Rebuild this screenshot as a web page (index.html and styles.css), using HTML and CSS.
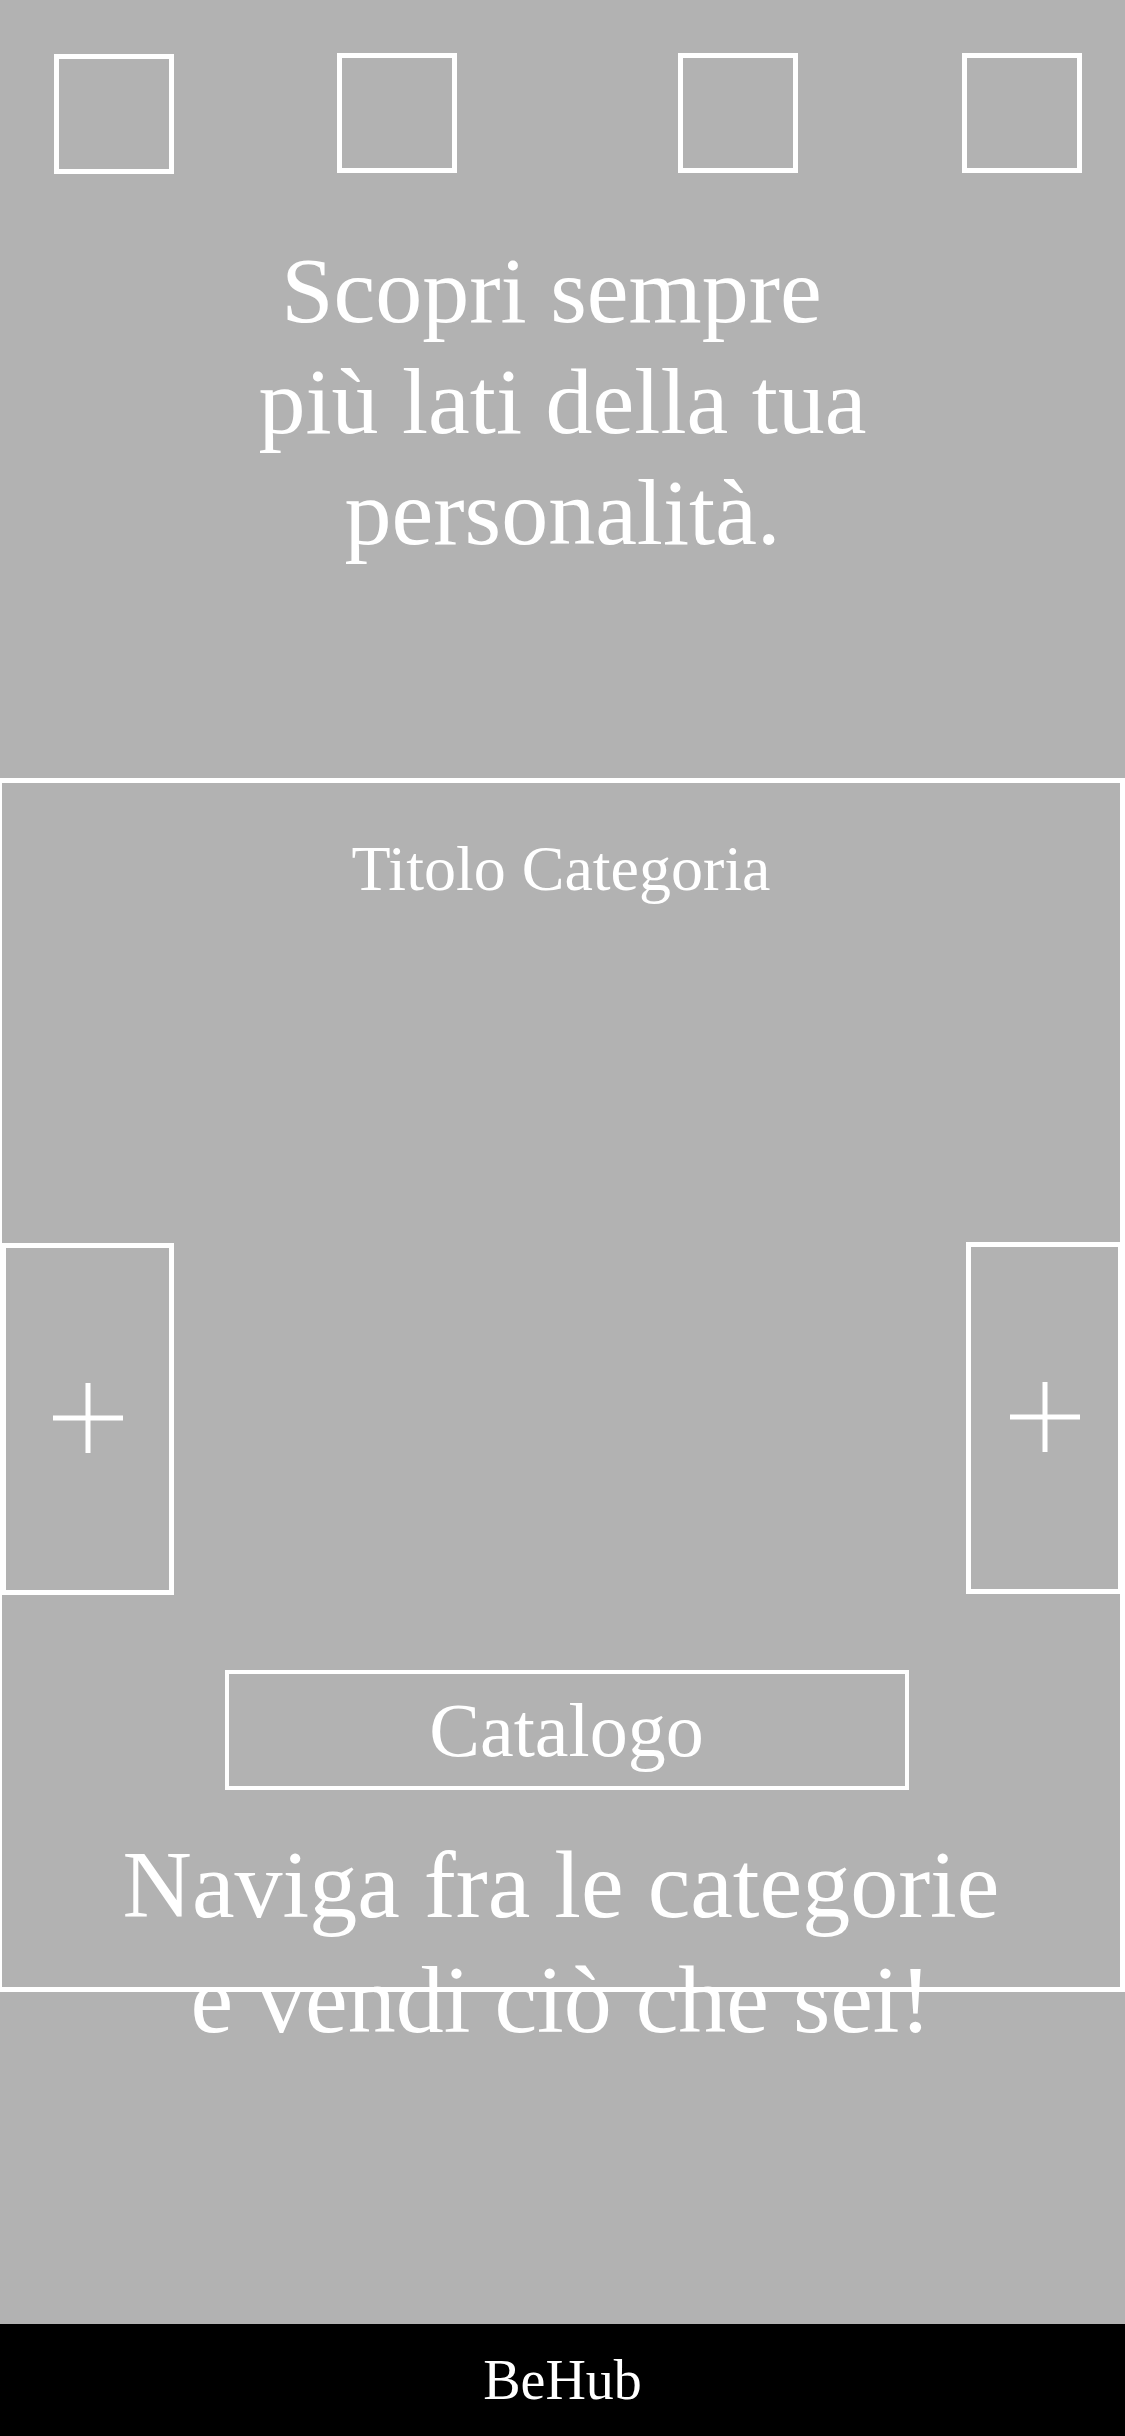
FILE: index.html
```html
<!DOCTYPE html>
<html lang="it">
<head>
<meta charset="utf-8">
<title>BeHub</title>
<link rel="stylesheet" href="styles.css">
</head>
<body>
<div class="page">
  <div class="top-icons">
    <div class="icon-box first"></div>
    <div class="icon-box second"></div>
    <div class="icon-box third"></div>
    <div class="icon-box fourth"></div>
  </div>
  <h1 class="hero"><span class="hero-first">Scopri sempre</span><br>più lati della tua<br>personalità.</h1>
  <section class="category">
    <h2 class="category-title">Titolo Categoria</h2>
    <div class="panels">
      <div class="panel left">
        <svg class="plus" width="70" height="70" viewBox="0 0 70 70"><rect x="32.5" y="0" width="5" height="70" fill="#fff"/><rect x="0" y="32.5" width="70" height="5" fill="#fff"/></svg>
      </div>
      <div class="panel right">
        <svg class="plus" width="70" height="70" viewBox="0 0 70 70"><rect x="32.5" y="0" width="5" height="70" fill="#fff"/><rect x="0" y="32.5" width="70" height="5" fill="#fff"/></svg>
      </div>
    </div>
    <div class="catalog-btn">Catalogo</div>
    <p class="tagline">Naviga fra le categorie<br>e vendi ciò che sei!</p>
  </section>
  <footer class="footer">BeHub</footer>
</div>
</body>
</html>
```
FILE: styles.css
```css
html, body {
  margin: 0;
  padding: 0;
}
body {
  background: #b2b2b2;
  color: #ffffff;
  font-family: "Liberation Serif", "Times New Roman", serif;
  overflow-x: hidden;
}
.page {
  min-height: 2436px;
  display: flex;
  flex-direction: column;
}
.top-icons {
  display: flex;
  align-items: flex-start;
  padding: 53px 0 0 54px;
  flex-shrink: 0;
}
.icon-box {
  width: 120px;
  height: 120px;
  box-sizing: border-box;
  border: 5px solid #ffffff;
  flex-shrink: 0;
}
.icon-box.first { margin-top: 1px; }
.icon-box.second { margin-left: 163px; }
.icon-box.third { margin-left: 221px; }
.icon-box.fourth { margin-left: 164px; }
.hero {
  margin: 61px 0 0 0;
  font-size: 94px;
  font-weight: normal;
  line-height: 111px;
  text-align: center;
  flex-shrink: 0;
}
.hero-first {
  padding-right: 22px;
}
.category {
  margin: 210px 0 0 -3px;
  width: calc(100% + 3px);
  height: 1214px;
  box-sizing: border-box;
  border: 5px solid #ffffff;
  display: flex;
  flex-direction: column;
  align-items: center;
  flex-shrink: 0;
}
.category > * {
  flex-shrink: 0;
}
.category-title {
  margin: 49px 0 0 0;
  font-size: 64px;
  font-weight: normal;
  line-height: normal;
  text-align: center;
}
.panels {
  align-self: stretch;
  display: flex;
  justify-content: space-between;
  align-items: flex-start;
  margin: 336px -3px 0 -1px;
}
.panel {
  height: 352px;
  box-sizing: border-box;
  border: 5px solid #ffffff;
  display: flex;
  align-items: center;
  justify-content: center;
}
.panel.left {
  width: 173px;
  margin-top: 1px;
}
.panel.right {
  width: 157px;
}
.plus {
  display: block;
  margin-top: -3px;
}
.catalog-btn {
  margin: 75px 0 0 11px;
  width: 684px;
  height: 120px;
  box-sizing: border-box;
  border: 4px solid #ffffff;
  display: flex;
  align-items: center;
  justify-content: center;
  font-size: 76px;
  line-height: normal;
}
.tagline {
  margin: 37px 0 0 0;
  font-size: 96px;
  line-height: 1.2;
  text-align: center;
}
.footer {
  margin-top: auto;
  height: 112px;
  background: #000000;
  display: flex;
  align-items: center;
  justify-content: center;
  font-size: 56px;
  flex-shrink: 0;
}
```
